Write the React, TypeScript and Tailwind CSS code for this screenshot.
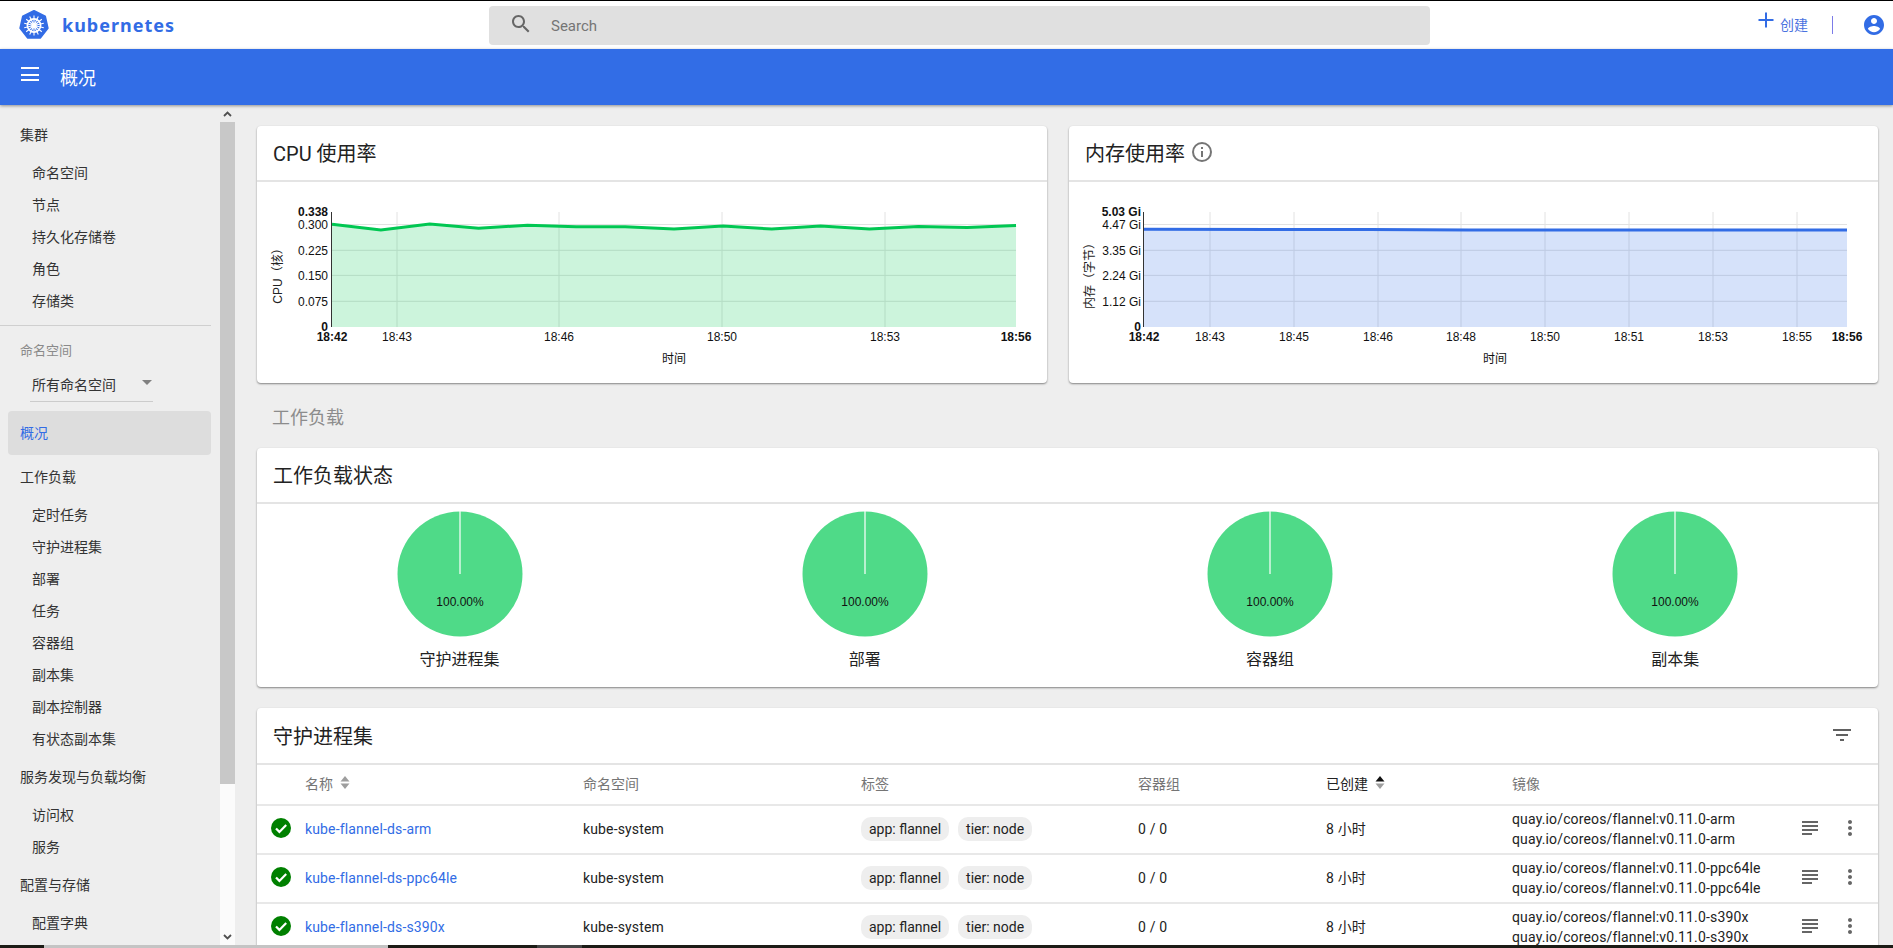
import type { ReactNode } from "react";

const chartFont = "'Liberation Sans', 'Noto Sans CJK SC', sans-serif";

const nav: Array<[string, string[]]> = [
  ["工作负载", ["定时任务", "守护进程集", "部署", "任务", "容器组", "副本集", "副本控制器", "有状态副本集"]],
  ["服务发现与负载均衡", ["访问权", "服务"]],
  ["配置与存储", ["配置字典"]],
];

const yTicks = [224.5, 250.3, 275.4, 301.3];
const cpuLine = [224.3, 230, 224, 228.3, 225.3, 226.7, 226.7, 229, 226, 229, 226, 229, 226.5, 227.5, 225.5];
const pies = ["守护进程集", "部署", "容器组", "副本集"];
const rows = ["arm", "ppc64le", "s390x"];

const tableCols = "grid grid-cols-[48px_278px_278px_277px_188px_186px_281px_85px]";

const NavHead = ({ children }: { children: string }) => (
  <div className="flex h-11 items-center pl-5 text-sm text-[#333]">{children}</div>
);

const NavRow = ({ children }: { children: string }) => (
  <div className="flex h-8 items-center pl-8 text-sm text-[#333]">{children}</div>
);

const Card = ({ title, extra, tall, children }: { title: string; extra?: ReactNode; tall?: boolean; children: ReactNode }) => (
  <section className="rounded-sm bg-white shadow-[0_1px_2px_rgba(0,0,0,0.45)]">
    <div className={`flex ${tall ? "h-[57px]" : "h-14"} items-center border-b-2 border-[#e4e4e4] pl-4 pt-0.5 text-xl text-[#222]`}>
      {title}
      {extra}
    </div>
    {children}
  </section>
);

type ChartProps = {
  width: number;
  right: number;
  color: string;
  line: string;
  times: Array<[string, number]>;
  yLabels: string[];
  top: string;
  axis: string;
  timeX: number;
  labelGap: number;
};

const LEFT = 75;

const Chart = ({ width, right, color, line, times, yLabels, top, axis, timeX, labelGap }: ChartProps) => (
  <svg width={width} height={201} viewBox={`0 0 ${width} 201`} fontFamily={chartFont} fontSize="12" className="block">
    <g stroke="#e2e2e2" strokeWidth="1">
      {yTicks.map((y) => (
        <line key={y} x1={LEFT} x2={right} y1={y - 182} y2={y - 182} />
      ))}
      {times.map(([label, x]) => (
        <line key={label} x1={x} x2={x} y1={30} y2={145} />
      ))}
    </g>
    <polygon points={`${LEFT},145 ${line} ${right},145`} fill={color} fillOpacity="0.2" />
    <polyline points={line} fill="none" stroke={color} strokeWidth="3" />
    <line x1={LEFT - 0.5} x2={LEFT - 0.5} y1={30} y2={145} stroke="#333" strokeWidth="1" />
    <g textAnchor="end" fill="#111">
      <text x={LEFT - labelGap} y={33.5} fontWeight="700">{top}</text>
      {yLabels.map((label, i) => (
        <text key={label} x={LEFT - labelGap} y={yTicks[i] - 182 + 4.5}>{label}</text>
      ))}
      <text x={LEFT - labelGap} y={149} fontWeight="700">0</text>
    </g>
    <g textAnchor="middle" fill="#111">
      <text x={LEFT} y={159} fontWeight="700">18:42</text>
      {times.map(([label, x]) => (
        <text key={label} x={x} y={159}>{label}</text>
      ))}
      <text x={right} y={159} fontWeight="700">18:56</text>
      <text x={timeX} y={181}>时间</text>
    </g>
    <text x={25} y={91} fill="#222" textAnchor="middle" transform="rotate(-90 25 91)">{axis}</text>
  </svg>
);

const Sort = ({ active }: { active?: boolean }) => (
  <svg width="10" height="14" viewBox="0 0 10 14" className="-mt-1 ml-[7px]">
    <path d="M5 1 9.5 6.5H.5Z" fill={active ? "#111" : "#9e9e9e"} />
    <path d="M.5 8.5H9.5L5 14Z" fill="#9e9e9e" />
  </svg>
);

const Pie = ({ label }: { label: string }) => (
  <div className="flex flex-col items-center pt-[7px]">
    <svg width="126" height="126" viewBox="0 0 126 126" className="block">
      <circle cx="63" cy="63" r="62.5" fill="#4fda88" />
      <line x1="63" x2="63" y1="0" y2="63" stroke="#fff" strokeWidth="1.2" />
      <text x="63" y="95" fontFamily={chartFont} fontSize="12" textAnchor="middle" fill="#111">100.00%</text>
    </svg>
    <div className="mt-[11px] text-base leading-6 text-[#222]">{label}</div>
  </div>
);

const Chip = ({ children }: { children: string }) => (
  <span className="flex h-6 items-center rounded-[10px] bg-[#eeeeee] px-2 text-sm tracking-normal text-[#222]">{children}</span>
);

const TableRow = ({ arch }: { arch: string }) => (
  <div className={`${tableCols} h-[49px] shrink-0 items-center border-b-2 border-[#e8e8e8] pb-0.5 text-sm tracking-[0.15px] text-[#222]`}>
    <svg width="24" height="24" viewBox="0 0 24 24" className="-mt-0.5 ml-3">
      <circle cx="12" cy="12" r="10" fill="#008000" />
      <path d="m7 12.5 3.4 3.4L17.2 9" fill="none" stroke="#fff" strokeWidth="2.2" />
    </svg>
    <span className="text-[#326ce5]">kube-flannel-ds-{arch}</span>
    <span>kube-system</span>
    <div className="flex gap-[9px]">
      <Chip>app: flannel</Chip>
      <Chip>tier: node</Chip>
    </div>
    <span>0 / 0</span>
    <span>8 小时</span>
    <div className="leading-5">
      <div>quay.io/coreos/flannel:v0.11.0-{arch}</div>
      <div>quay.io/coreos/flannel:v0.11.0-{arch}</div>
    </div>
    <div className="-mt-0.5 ml-[5px] flex gap-4">
      <svg width="24" height="24" viewBox="0 0 24 24" fill="#666">
        <path d="M14 17H4v2h10v-2zm6-8H4v2h16V9zM4 15h16v-2H4v2zM4 5v2h16V5H4z" />
      </svg>
      <svg width="24" height="24" viewBox="0 0 24 24" fill="#666">
        <path d="M12 8c1.1 0 2-.9 2-2s-.9-2-2-2-2 .9-2 2 .9 2 2 2zm0 2c-1.1 0-2 .9-2 2s.9 2 2 2 2-.9 2-2-.9-2-2-2zm0 6c-1.1 0-2 .9-2 2s.9 2 2 2 2-.9 2-2-.9-2-2-2z" />
      </svg>
    </div>
  </div>
);

export default function App() {
  const cpuPoints = cpuLine.map((y, i) => `${LEFT + i * 48.86},${y - 182}`).join(" ");
  const memPoints = "75,47.3 300,47.5 400,48 778,48";

  return (
    <div className="flex h-[948px] w-[1893px] flex-col overflow-hidden bg-[#eeeeee] font-['Roboto','Noto_Sans_CJK_SC',sans-serif]">
      <div className="h-px shrink-0 bg-black" />
      <header className="flex h-12 shrink-0 items-center bg-white">
        <div className="flex w-[489px] items-center pl-[19px]">
          <svg width="30" height="30" viewBox="0 0 30 30">
            <path d="M15 1 26 6.3 28.7 18.2 21.1 27.8H8.9L1.3 18.2 4 6.3Z" fill="#326ce5" stroke="#326ce5" strokeWidth="2" strokeLinejoin="round" />
            <g stroke="#fff" fill="none">
              <circle cx="15" cy="15.5" r="6.6" strokeWidth="1.7" />
              <circle cx="15" cy="15.5" r="1.6" fill="#fff" strokeWidth="0" />
              <path d="M15 5.5V25.5M7.2 9.3 22.8 21.7M22.8 9.3 7.2 21.7M5.2 17.7 24.8 13.3M24.8 17.7 5.2 13.3M10.7 24.5 19.3 6.5M19.3 24.5 10.7 6.5" strokeWidth="1.1" />
            </g>
          </svg>
          <span className="ml-[13px] font-['Noto_Sans',sans-serif] text-lg font-bold tracking-[1px] text-[#326ce5]">kubernetes</span>
        </div>
        <div className="flex h-[39px] w-[941px] items-center rounded-sm bg-[#e0e0e0] pl-5">
          <svg width="24" height="24" viewBox="0 0 24 24" fill="#666" className="-mt-[3px]">
            <path d="M15.5 14h-.79l-.28-.27C15.41 12.59 16 11.11 16 9.5 16 5.91 13.09 3 9.5 3S3 5.91 3 9.5 5.91 16 9.5 16c1.61 0 3.09-.59 4.23-1.57l.27.28v.79l5 4.99L20.49 19l-4.99-5zm-6 0C7.01 14 5 11.99 5 9.5S7.01 5 9.5 5 14 7.01 14 9.5 11.99 14 9.5 14z" />
          </svg>
          <span className="ml-[18px] mt-0.5 text-[15px] text-[#757575]">Search</span>
        </div>
        <div className="flex flex-1 items-center pl-[328px]">
          <svg width="16" height="16" viewBox="0 0 16 16" className="-mt-2.5">
            <path d="M8 .5V15.5M.5 8H15.5" stroke="#326ce5" strokeWidth="2" />
          </svg>
          <span className="ml-1.5 text-sm text-[#4a72e0]">创建</span>
          <div className="ml-6 h-[18px] w-px bg-[#7c7ce8]" />
          <svg width="24" height="24" viewBox="0 0 24 24" className="ml-[29px]">
            <path fill="#326ce5" d="M12 2C6.48 2 2 6.48 2 12s4.48 10 10 10 10-4.48 10-10S17.52 2 12 2zm0 3c1.66 0 3 1.34 3 3s-1.34 3-3 3-3-1.34-3-3 1.34-3 3-3zm0 14.2c-2.5 0-4.71-1.28-6-3.22.03-1.99 4-3.08 6-3.08 1.99 0 5.97 1.09 6 3.08-1.29 1.94-3.5 3.22-6 3.22z" />
          </svg>
        </div>
      </header>

      <div className="z-10 flex h-14 shrink-0 items-center bg-[#326de6] pl-[18px] shadow-[0_1px_3px_rgba(0,0,0,0.4)]">
        <svg width="24" height="24" viewBox="0 0 24 24" fill="#fff" className="-mt-1">
          <path d="M3 18h18v-2H3v2zm0-5h18v-2H3v2zm0-7h18V4H3v2z" />
        </svg>
        <span className="ml-[18px] mt-1 text-lg text-white">概况</span>
      </div>

      <div className="flex min-h-0 flex-1">
        <aside className="w-[220px] shrink-0 overflow-hidden pt-2">
          <NavHead>集群</NavHead>
          {["命名空间", "节点", "持久化存储卷", "角色", "存储类"].map((label) => (
            <NavRow key={label}>{label}</NavRow>
          ))}
          <div className="my-2 mr-[9px] h-px bg-[#cfcfcf]" />
          <div className="flex h-[33px] items-center pl-5 text-[13px] text-[#8a8a8a]">命名空间</div>
          <div className="relative ml-[30px] flex h-[35px] w-[123px] items-center border-b border-[#cccccc] pl-0.5 pt-0.5 text-sm text-[#333]">
            所有命名空间
            <span className="absolute right-px top-[13px] size-0 border-x-[5px] border-t-[5px] border-x-transparent border-t-[#808080]" />
          </div>
          <div className="ml-2 mr-[9px] mt-[9px] flex h-11 items-center rounded-sm bg-[#dddddd] pl-3 text-sm text-[#326ce5]">概况</div>
          {nav.map(([head, items]) => (
            <div key={head}>
              <NavHead>{head}</NavHead>
              {items.map((label) => (
                <NavRow key={label}>{label}</NavRow>
              ))}
            </div>
          ))}
        </aside>

        <div className="flex w-[15px] shrink-0 flex-col bg-[#fbfbfb]">
          <div className="flex h-[17px] items-center justify-center bg-[#eeeeee]">
            <svg width="9" height="6" viewBox="0 0 9 6"><path d="M1 5 4.5 1.5 8 5" fill="none" stroke="#505050" strokeWidth="1.8" /></svg>
          </div>
          <div className="h-[662px] bg-[#c8c8c8]" />
          <div className="flex-1" />
          <div className="flex h-[17px] items-center justify-center">
            <svg width="9" height="6" viewBox="0 0 9 6"><path d="M1 1 4.5 4.5 8 1" fill="none" stroke="#505050" strokeWidth="1.8" /></svg>
          </div>
        </div>

        <main className="min-w-0 flex-1 overflow-hidden pl-[22px] pr-[15px] pt-[21px]">
          <div className="grid grid-cols-[790px_809px] gap-[22px]">
            <Card title="CPU 使用率">
              <Chart
                width={790}
                right={759}
                color="#00c752"
                line={cpuPoints}
                times={[["18:43", 140], ["18:46", 302], ["18:50", 465], ["18:53", 628]]}
                yLabels={["0.300", "0.225", "0.150", "0.075"]}
                top="0.338"
                axis="CPU（核）"
                timeX={417}
                labelGap={4}
              />
            </Card>
            <Card
              title="内存使用率"
              extra={
                <svg width="24" height="24" viewBox="0 0 24 24" className="-mt-1 ml-[5px]">
                  <circle cx="12" cy="12" r="9" fill="none" stroke="#757575" strokeWidth="2" />
                  <path d="M11 11h2v6h-2zM11 7h2v2h-2z" fill="#757575" />
                </svg>
              }
            >
              <Chart
                width={809}
                right={778}
                color="#326ce5"
                line={memPoints}
                times={[["18:43", 141], ["18:45", 225], ["18:46", 309], ["18:48", 392], ["18:50", 476], ["18:51", 560], ["18:53", 644], ["18:55", 728]]}
                yLabels={["4.47 Gi", "3.35 Gi", "2.24 Gi", "1.12 Gi"]}
                top="5.03 Gi"
                axis="内存（字节）"
                timeX={426}
                labelGap={3}
              />
            </Card>
          </div>

          <div className="flex h-[65px] items-center pl-[15px] pt-1 text-lg text-[#8c8c8c]">工作负载</div>

          <Card title="工作负载状态">
            <div className="grid h-[183px] grid-cols-4">
              {pies.map((label) => (
                <Pie key={label} label={label} />
              ))}
            </div>
          </Card>

          <div className="mt-[21px]">
            <Card
              title="守护进程集"
              tall
              extra={
                <svg width="24" height="24" viewBox="0 0 24 24" fill="#616161" className="-mt-1 ml-auto mr-6">
                  <path d="M10 18h4v-2h-4v2zM3 6v2h18V6H3zm3 7h12v-2H6v2z" />
                </svg>
              }
            >
              <div className={`${tableCols} h-[41px] items-center border-b-2 border-[#e8e8e8] pb-0.5 text-sm text-[#757575]`}>
                <span />
                <span className="flex items-center">名称<Sort /></span>
                <span>命名空间</span>
                <span>标签</span>
                <span>容器组</span>
                <span className="flex items-center text-[#222]">已创建<Sort active /></span>
                <span>镜像</span>
                <span />
              </div>
              {rows.map((arch) => (
                <TableRow key={arch} arch={arch} />
              ))}
            </Card>
          </div>
        </main>
      </div>

      <div className="flex h-[3px] shrink-0 bg-[#1c1c16]">
        <div className="w-11" />
        <div className="w-[344px] bg-[#c4c4c4]" />
        <div className="ml-[149px] w-[45px] bg-[#444]" />
      </div>
    </div>
  );
}
